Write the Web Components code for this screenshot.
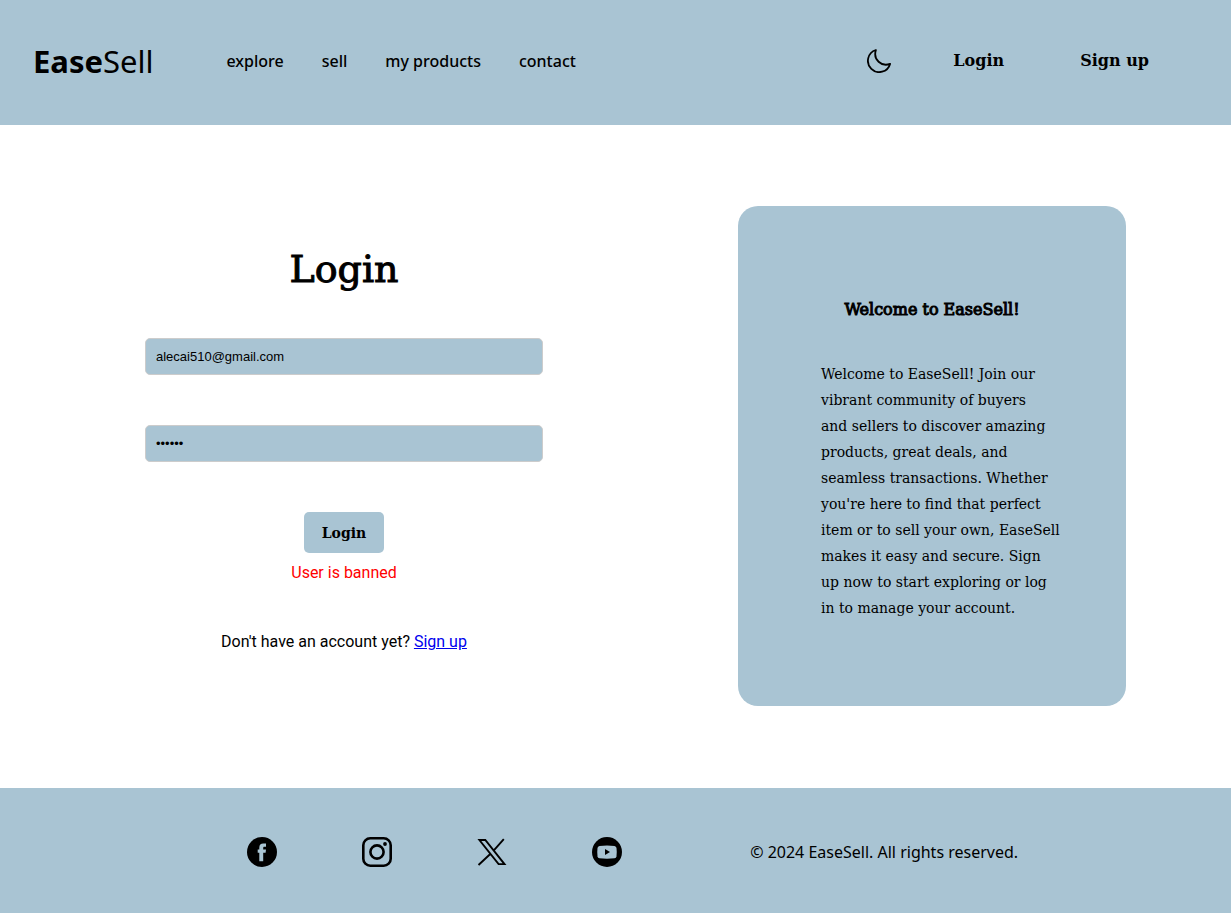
<!DOCTYPE html>
<html lang="en">
<head>
<meta charset="utf-8">
<title>EaseSell - Login</title>
<style>
  :root { --tint: #a9c4d3; --sans: "Noto Sans", "Open Sans", sans-serif; --slab: "DejaVu Serif", serif; }
  body { margin: 0; background: #fff; color: #000; font: 16px/20px Roboto, sans-serif; }
</style>
</head>
<body>
<ease-page>
  <ease-header slot="header"></ease-header>
  <login-form></login-form>
  <welcome-card>
    <span slot="title">Welcome to EaseSell!</span>
    Welcome to EaseSell! Join our<br>
    vibrant community of buyers<br>
    and sellers to discover amazing<br>
    products, great deals, and<br>
    seamless transactions. Whether<br>
    you're here to find that perfect<br>
    item or to sell your own, EaseSell<br>
    makes it easy and secure. Sign<br>
    up now to start exploring or log<br>
    in to manage your account.
  </welcome-card>
  <ease-footer slot="footer">© 2024 EaseSell. All rights reserved.</ease-footer>
</ease-page>
<script>
const define = (name, html, setup) => {
  const template = document.createElement('template');
  template.innerHTML = html;
  customElements.define(name, class extends HTMLElement {
    constructor() {
      super();
      const root = this.attachShadow({ mode: 'open' });
      root.append(template.content.cloneNode(true));
      if (setup) setup(root);
    }
  });
};

define('ease-page', `
<style>
  :host { display: flex; flex-direction: column; min-height: 100vh; }
  main { flex: 1; box-sizing: border-box; display: grid; grid-template-columns: 398fr 388fr; column-gap: 195px; align-items: start; padding: 81px 105px 82px 145px; }
  @media (max-width: 900px) { main { grid-template-columns: 1fr; row-gap: 48px; padding: 48px 24px; } }
</style>
<slot name="header"></slot>
<main><slot></slot></main>
<slot name="footer"></slot>`);

define('ease-header', `
<style>
  :host { display: block; background: var(--tint); font-family: var(--sans); }
  header { display: flex; flex-wrap: wrap; align-items: center; box-sizing: border-box; min-height: 125px; padding: 0 82px 3px 33px; }
  a { color: inherit; text-decoration: none; }
  .logo { font-size: 31px; line-height: 40px; margin-right: 73px; }
  nav { display: flex; gap: 38px; font-weight: 500; }
  .account { display: flex; align-items: center; gap: 76px; margin-left: auto; font: bold 16px/20px var(--slab); }
  button { display: flex; padding: 0; margin-right: -14px; border: 0; background: none; color: inherit; cursor: pointer; }
</style>
<header>
  <a class="logo" href="#"><b>Ease</b>Sell</a>
  <nav>
    <a href="#explore">explore</a>
    <a href="#sell">sell</a>
    <a href="#products">my products</a>
    <a href="#contact">contact</a>
  </nav>
  <div class="account">
    <button type="button" aria-label="Dark mode">
      <svg width="24" height="24" viewBox="0 0 24 24" fill="none" stroke="currentColor" stroke-width="1.8" stroke-linejoin="round"><path d="M8.900 1A11.300 11.300 0 1 0 23.100 14.900C14.500 18.200 5.800 10.500 8.900 1Z"/></svg>
    </button>
    <a href="#login">Login</a>
    <a href="#signup">Sign up</a>
  </div>
</header>`);

define('login-form', `
<style>
  :host { display: block; padding-top: 39px; }
  form { display: flex; flex-direction: column; align-items: center; }
  h1 { margin: 0 0 45px; font: 38px/48px var(--slab); -webkit-text-stroke: 1px #000; }
  input { box-sizing: border-box; width: 100%; height: 37px; margin: 0 0 50px; padding: 0 10px; border: 1px solid #ccc; border-radius: 5px; background: var(--tint); color: #000; font: 13px/16px "Liberation Sans", sans-serif; }
  button { height: 41px; padding: 0 18px; border: 0; border-radius: 5px; background: var(--tint); color: #000; font: bold 14px/20px var(--slab); cursor: pointer; }
  p { margin: 0; }
  .error { margin: 10px 0 49px; color: #f00; }
  a { color: #00e; }
</style>
<form>
  <h1>Login</h1>
  <input type="email" aria-label="Email" value="alecai510@gmail.com">
  <input type="password" aria-label="Password" value="secret">
  <button type="submit">Login</button>
  <p class="error" role="alert">User is banned</p>
  <p>Don't have an account yet? <a href="#signup">Sign up</a></p>
</form>`, root => root.querySelector('form').addEventListener('submit', e => e.preventDefault()));

define('welcome-card', `
<style>
  :host { display: block; box-sizing: border-box; min-height: 500px; padding: 91px 60px 85px 83px; border-radius: 20px; background: var(--tint); font-family: var(--slab); }
  h2 { margin: 0 23px 38px 0; font-size: 16px; line-height: 26px; font-weight: 400; text-align: center; -webkit-text-stroke: 1px #000; }
  p { margin: 0; font-size: 14px; line-height: 26px; }
</style>
<h2><slot name="title"></slot></h2>
<p><slot></slot></p>`);

define('ease-footer', `
<style>
  :host { display: block; background: var(--tint); font: 16px/20px var(--sans); }
  footer { display: flex; flex-wrap: wrap; align-items: center; gap: 24px 128px; min-height: 125px; box-sizing: border-box; padding: 3px 0 0 20%; }
  .social { display: flex; gap: 85px; margin-left: 1px; }
  a { display: flex; color: #000; }
  p { margin: 0; }
</style>
<footer>
  <div class="social">
    <a href="#facebook" aria-label="Facebook"><svg width="30" height="30" viewBox="0 0 30 30"><circle cx="15" cy="15" r="15"/><path fill="#a9c4d3" d="M12.300 24.300V15.800H10.700V12.600H12.300V10.800C12.300 7.800 13.600 6.500 16.300 6.500H19V9.700H17.400C16.500 9.700 16.200 10.100 16.200 11V12.600H19L18.600 15.800H16.200V24.300Z"/></svg></a>
    <a href="#instagram" aria-label="Instagram"><svg width="30" height="30" viewBox="0 0 30 30" fill="none" stroke="#000" stroke-width="2.600"><rect x="1.300" y="1.300" width="27.400" height="27.400" rx="7"/><circle cx="15" cy="15" r="6.600"/><circle cx="23" cy="7" r="1.900" fill="#000" stroke="none"/></svg></a>
    <a href="#x" aria-label="X"><svg width="30" height="30" viewBox="0 0 30 30" fill="none" stroke="#000" stroke-width="1.900"><path d="M2.400 3H8.300L27.500 27.100H21.600ZM26.800 2.200 16.400 13.800M13 17.200 1.500 28"/></svg></a>
    <a href="#youtube" aria-label="YouTube"><svg width="30" height="30" viewBox="0 0 30 30"><circle cx="15" cy="15" r="15"/><path fill="#a9c4d3" d="M7.500 8.900Q15 8 22.500 8.900Q24.200 9.200 24.500 11Q25 15 24.500 19.200Q24.200 21 22.500 21.300Q15 22.100 7.500 21.300Q5.800 21 5.500 19.200Q5 15 5.500 11Q5.800 9.200 7.500 8.900Z"/><path d="M13 12V18L18 15Z"/></svg></a>
  </div>
  <p><slot></slot></p>
</footer>`);
</script>
</body>
</html>
